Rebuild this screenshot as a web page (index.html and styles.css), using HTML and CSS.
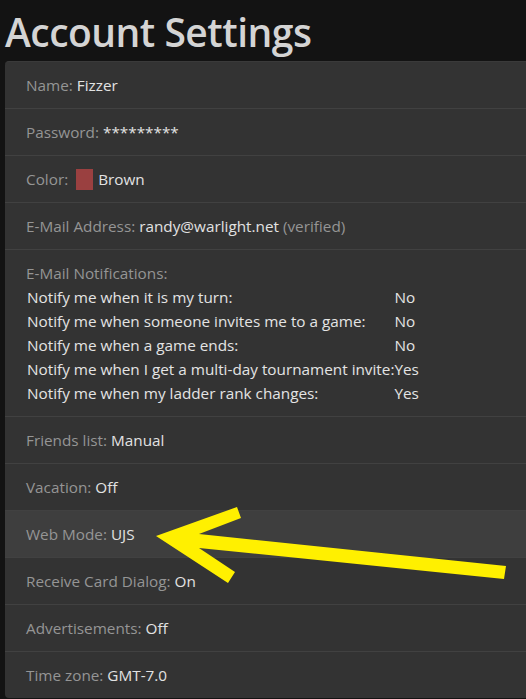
FILE: index.html
```html
<!DOCTYPE html>
<html>
<head>
<meta charset="utf-8">
<link rel="stylesheet" href="styles.css">
</head>
<body>
<h1 class="title">Account Settings</h1>
<div class="panel">
  <div class="row"><span class="lbl">Name:</span> <span class="val">Fizzer</span></div>
  <div class="row"><span class="lbl">Password:</span> <span class="val">*********</span></div>
  <div class="row"><span class="lbl">Color:</span> <span class="swatch"></span><span class="val">Brown</span></div>
  <div class="row"><span class="lbl">E-Mail Address:</span> <span class="val">randy@warlight.net</span> <span class="lbl">(verified)</span></div>
  <div class="row">
    <div class="lbl">E-Mail Notifications:</div>
    <table class="notif">
      <tr><td>Notify me when it is my turn:</td><td>No</td></tr>
      <tr><td>Notify me when someone invites me to a game:</td><td>No</td></tr>
      <tr><td>Notify me when a game ends:</td><td>No</td></tr>
      <tr><td>Notify me when I get a multi-day tournament invite:</td><td>Yes</td></tr>
      <tr><td>Notify me when my ladder rank changes:</td><td>Yes</td></tr>
    </table>
  </div>
  <div class="row"><span class="lbl">Friends list:</span> <span class="val">Manual</span></div>
  <div class="row"><span class="lbl">Vacation:</span> <span class="val">Off</span></div>
  <div class="row hl"><span class="lbl">Web Mode:</span> <span class="val">UJS</span></div>
  <div class="row"><span class="lbl">Receive Card Dialog:</span> <span class="val">On</span></div>
  <div class="row"><span class="lbl">Advertisements:</span> <span class="val">Off</span></div>
  <div class="row last"><span class="lbl">Time zone:</span> <span class="val">GMT-7.0</span></div>
</div>
<svg class="arrow" width="526" height="699" viewBox="0 0 526 699">
  <polygon fill="#fff000" points="156,536 237,507 241,518 199,534 506,566 504,579 199,548 235,572 228,583"/>
</svg>
</body>
</html>
```
FILE: styles.css
```css
html, body {
  margin: 0;
  padding: 0;
  background: #131313;
  overflow: hidden;
  width: 526px;
  height: 699px;
}
body {
  font-family: "Open Sans", "Noto Sans", sans-serif;
  font-size: 15.3px;
  color: #dcdcdc;
  position: relative;
}
.title {
  margin: 0;
  padding: 7px 0 0 5px;
  height: 61px;
  box-sizing: border-box;
  font-size: 39px;
  line-height: 50px;
  font-weight: 600;
  color: #d4d4d4;
  letter-spacing: -0.5px;
}
.panel {
  margin-left: 5px;
  width: 521px;
  background: #333333;
  border-radius: 4px 0 0 4px;
  border-top: 1px solid #3a3a3a;
  display: flex;
  flex-direction: column;
}
.row {
  padding: 11px 21px;
  line-height: 24px;
  border-bottom: 1px solid #414141;
  display: block;
}
.row.last {
  border-bottom: none;
}
.row.hl {
  background: #3e3e3e;
}
.lbl {
  color: #959595;
}
.val {
  color: #e2e2e2;
}
.swatch {
  display: inline-block;
  width: 17px;
  height: 21px;
  background: #9a4040;
  vertical-align: -5px;
  margin: 0 5px 0 4px;
}
.notif {
  border-collapse: collapse;
  color: #e4e4e4;
}
.notif td {
  padding: 0;
  height: 24px;
  line-height: 24px;
}
.notif td:first-child {
  padding-left: 1px;
}
.arrow {
  position: absolute;
  left: 0;
  top: 0;
  pointer-events: none;
}
```
